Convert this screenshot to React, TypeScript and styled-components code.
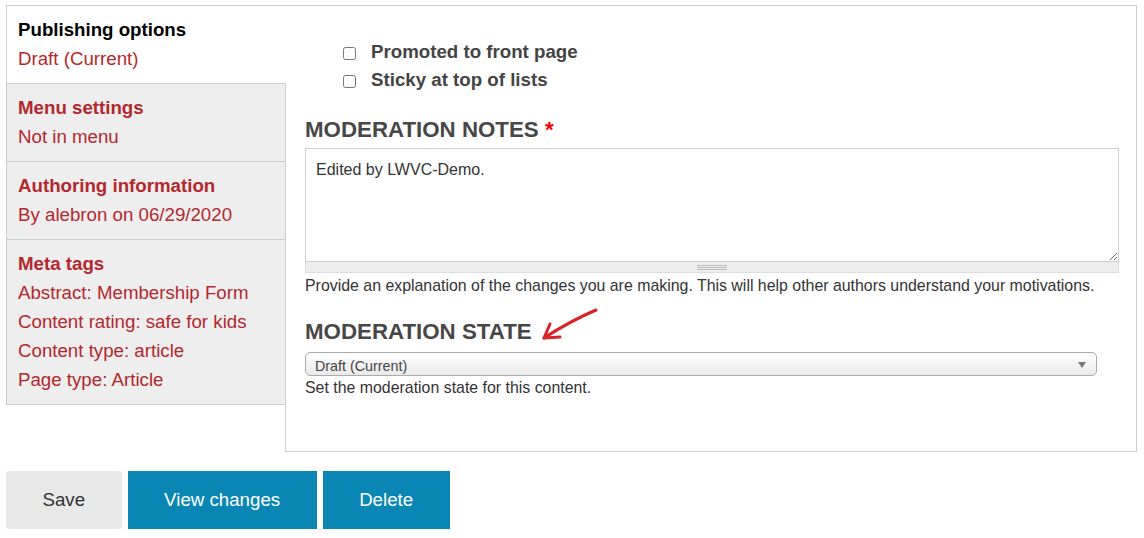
import React from "react";
import styled, { createGlobalStyle } from "styled-components";

const GlobalStyle = createGlobalStyle`
  html, body { margin: 0; padding: 0; background: #fff; }
  body { font-family: "Liberation Sans", Arial, sans-serif; color: #333; }
  * { box-sizing: border-box; }
`;

const Page = styled.div`
  padding: 5px 7px 0 6px;
`;

const Tabs = styled.div`
  display: flex;
  border-top: 1px solid #ccc;
`;

const TabList = styled.ul`
  position: relative;
  z-index: 1;
  list-style: none;
  margin: 0;
  padding: 0;
  width: 279px;
  flex-shrink: 0;
  align-self: flex-start;
  background: #eee;
  border-left: 1px solid #ccc;
  border-bottom: 1px solid #ccc;
`;

const Tab = styled.li<{ $selected?: boolean }>`
  padding: 9px 11px 10px 11px;
  margin-right: ${(p) => (p.$selected ? "-1px" : "0")};
  background: ${(p) => (p.$selected ? "#fff" : "#eee")};
  border-top: ${(p) => (p.$selected ? "none" : "1px solid #ccc")};
  font-size: 18.7px;
  line-height: 29px;
`;

const TabTitle = styled.div<{ $selected?: boolean }>`
  font-weight: bold;
  color: ${(p) => (p.$selected ? "#000" : "#b3282d")};
`;

const TabSummary = styled.div`
  color: #b3282d;
`;

const Panel = styled.div`
  flex: 1;
  border-left: 1px solid #ccc;
  border-right: 1px solid #ccc;
  border-bottom: 1px solid #ccc;
  padding: 32px 17px 0 19px;
  height: 446px;
`;

const CheckboxGroup = styled.div`
  margin-left: 38px;
  display: flex;
  flex-direction: column;
`;

const CheckRow = styled.label`
  display: flex;
  align-items: center;
  height: 28px;
  font-size: 18.7px;
  font-weight: bold;
  color: #444;
`;

const Check = styled.input`
  width: 13px;
  height: 13px;
  margin: 2px 15px 0 0;
`;

const Heading = styled.h3<{ $top: number }>`
  position: relative;
  display: inline-block;
  margin: ${(p) => p.$top}px 0 0 0;
  font-size: 22.3px;
  line-height: 26px;
  font-weight: bold;
  color: #474747;
  text-transform: uppercase;
`;

const Required = styled.span`
  color: #e00;
`;

const Field = styled.div`
  display: flex;
  flex-direction: column;
  align-items: flex-start;
`;

const NotesBox = styled.div`
  margin-top: 5px;
  width: 814px;
  display: flex;
  flex-direction: column;
`;

const NotesArea = styled.textarea`
  display: block;
  width: 100%;
  height: 114px;
  border: 1px solid #ccc;
  padding: 11px 10px;
  margin: 0;
  font-family: "Liberation Sans", Arial, sans-serif;
  font-size: 16px;
  line-height: 19px;
  color: #333;
  resize: vertical;
  outline: none;
`;

const Grippie = styled.div`
  height: 11px;
  background: #eee;
  border: 1px solid #ddd;
  border-top: none;
  display: flex;
  justify-content: center;
  align-items: center;
`;

const GripLines = styled.div`
  width: 30px;
  height: 5px;
  background: repeating-linear-gradient(
    to bottom,
    #bbb 0,
    #bbb 1px,
    transparent 1px,
    transparent 2px
  );
`;

const Description = styled.div<{ $top: number }>`
  margin-top: ${(p) => p.$top}px;
  font-size: 15.9px;
  line-height: 18px;
  color: #333;
`;

const Arrow = styled.svg`
  position: absolute;
  left: calc(100% + 8px);
  top: -12px;
  overflow: visible;
`;

const SelectBox = styled.div`
  margin-top: 7px;
  width: 792px;
  height: 24px;
  border: 1px solid #aaa;
  border-radius: 5px;
  background: linear-gradient(to bottom, #fff 0%, #f3f3f3 55%, #e9e9e9 100%);
  display: flex;
  align-items: center;
  justify-content: space-between;
  padding: 3px 10px 0 9px;
  font-size: 14.3px;
  color: #444;
`;

const SelectArrow = styled.span`
  width: 0;
  height: 0;
  margin-top: -2px;
  border-left: 4px solid transparent;
  border-right: 4px solid transparent;
  border-top: 6px solid #777;
`;

const Actions = styled.div`
  display: flex;
  gap: 6px;
  margin-top: 19px;
`;

const Button = styled.button<{ $primary?: boolean }>`
  height: 58px;
  padding: 0 36.5px;
  border: none;
  border-radius: ${(p) => (p.$primary ? "0" : "3px")};
  background: ${(p) => (p.$primary ? "#0a86b5" : "#e8e8e8")};
  color: ${(p) => (p.$primary ? "#fff" : "#333")};
  font-family: "Liberation Sans", Arial, sans-serif;
  font-size: 18.7px;
  cursor: pointer;
`;

const tabs = [
  { title: "Publishing options", summary: ["Draft (Current)"], selected: true },
  { title: "Menu settings", summary: ["Not in menu"] },
  { title: "Authoring information", summary: ["By alebron on 06/29/2020"] },
  {
    title: "Meta tags",
    summary: [
      "Abstract: Membership Form",
      "Content rating: safe for kids",
      "Content type: article",
      "Page type: Article",
    ],
  },
];

export default function App() {
  return (
    <>
      <GlobalStyle />
      <Page>
        <Tabs>
          <TabList>
            {tabs.map((t) => (
              <Tab key={t.title} $selected={t.selected}>
                <TabTitle $selected={t.selected}>{t.title}</TabTitle>
                {t.summary.map((s) => (
                  <TabSummary key={s}>{s}</TabSummary>
                ))}
              </Tab>
            ))}
          </TabList>
          <Panel>
            <CheckboxGroup>
              <CheckRow>
                <Check type="checkbox" />
                Promoted to front page
              </CheckRow>
              <CheckRow>
                <Check type="checkbox" />
                Sticky at top of lists
              </CheckRow>
            </CheckboxGroup>
            <Field>
              <Heading $top={23}>
                Moderation notes <Required>*</Required>
              </Heading>
              <NotesBox>
                <NotesArea readOnly defaultValue="Edited by LWVC-Demo." />
                <Grippie>
                  <GripLines />
                </Grippie>
              </NotesBox>
              <Description $top={4}>
                Provide an explanation of the changes you are making. This will
                help other authors understand your motivations.
              </Description>
            </Field>
            <Field>
              <Heading $top={24}>
                Moderation state
                <Arrow width="60" height="36" viewBox="0 0 60 36">
                  <path
                    d="M56 3 C 42 9, 24 18, 4 31"
                    fill="none"
                    stroke="#d8232a"
                    strokeWidth="3"
                    strokeLinecap="round"
                  />
                  <path
                    d="M10 17 L 4 31 L 20 30"
                    fill="none"
                    stroke="#d8232a"
                    strokeWidth="3"
                    strokeLinecap="round"
                    strokeLinejoin="round"
                  />
                </Arrow>
              </Heading>
              <SelectBox>
                <span>Draft (Current)</span>
                <SelectArrow />
              </SelectBox>
              <Description $top={3}>
                Set the moderation state for this content.
              </Description>
            </Field>
          </Panel>
        </Tabs>
        <Actions>
          <Button>Save</Button>
          <Button $primary>View changes</Button>
          <Button $primary>Delete</Button>
        </Actions>
      </Page>
    </>
  );
}
